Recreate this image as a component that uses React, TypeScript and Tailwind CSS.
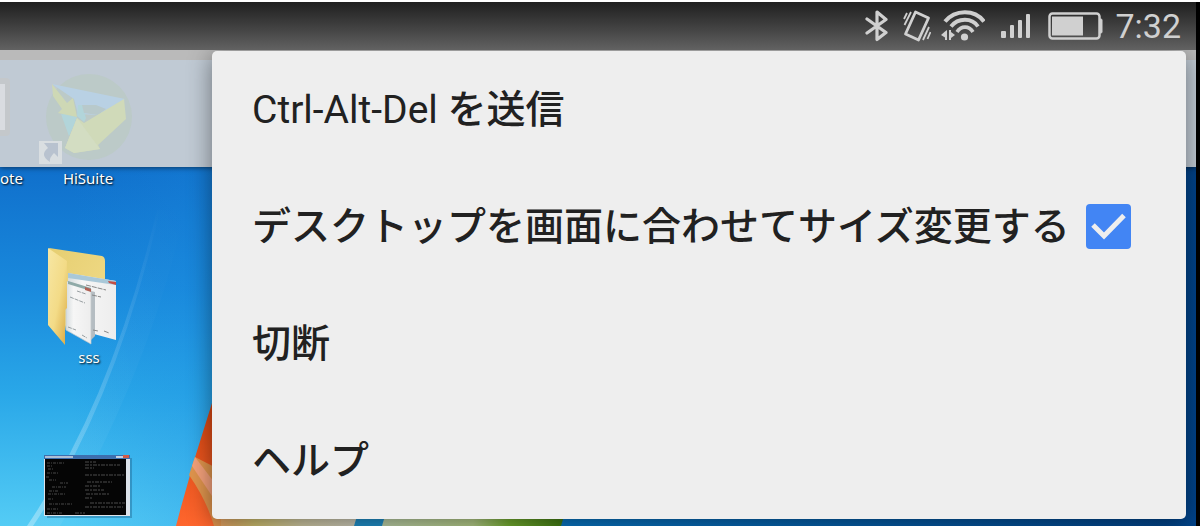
import { useState } from "react";
import type { ReactNode } from "react";

function BluetoothIcon() {
  return (
    <svg className="h-8 w-6" viewBox="0 0 24 32" fill="none" stroke="#d0d0d0" strokeWidth="3.2" aria-hidden="true">
      <path d="M2 9 L21 22.500 L12 29.500 V2 L21 9.500 L2 23" strokeLinejoin="round" strokeLinecap="round" />
    </svg>
  );
}

function VibrateIcon() {
  return (
    <svg className="h-8 w-7" viewBox="0 0 28 32" fill="none" stroke="#d0d0d0" aria-hidden="true">
      <path d="M12.500 2 L25.500 8 L15.500 30 L2.500 24 Z" strokeWidth="2.800" strokeLinejoin="round" />
      <path d="M8 2 L1.500 15 M4 3 L1 9 M26 17 L20 30 M27.500 22 L24.500 29" strokeWidth="1.800" />
    </svg>
  );
}

function WifiIcon() {
  return (
    <svg className="h-8 w-11" viewBox="0 0 44 32" fill="none" stroke="#d0d0d0" aria-hidden="true">
      <path d="M4 11.500 C14 -1 34 -1 43 11.500" strokeWidth="4" />
      <path d="M10 16.500 C17 7.500 31 7.500 37 16.500" strokeWidth="3.800" />
      <path d="M16 22 C20 15.500 28 15.500 32 22" strokeWidth="3.600" />
      <circle cx="23.500" cy="27" r="3.600" fill="#d0d0d0" stroke="none" />
      <path d="M6 20 V30 H4 V27.500 L0 25 L4 21.500 Z M8 20 H10 V22 L14 25 L10 28 V30 H8 Z" fill="#d0d0d0" stroke="none" />
    </svg>
  );
}

function SignalIcon() {
  return (
    <svg className="h-7 w-[30px]" viewBox="0 0 30 28" fill="#d0d0d0" aria-hidden="true">
      <rect x="0" y="19" width="5" height="7" rx="1" />
      <rect x="9" y="13" width="4" height="13" rx="1" />
      <rect x="17" y="8" width="4" height="18" rx="1" />
      <rect x="25" y="2" width="4" height="24" rx="1" />
    </svg>
  );
}

function BatteryIcon() {
  return (
    <svg className="h-7 w-14" viewBox="0 0 56 28" aria-hidden="true">
      <rect x="2.500" y="1.500" width="50" height="25" rx="3" fill="none" stroke="#d0d0d0" strokeWidth="2.500" />
      <rect x="5" y="4.500" width="31" height="19" fill="#d0d0d0" />
      <path d="M53 7 H54 Q55 7 55 8 V20 Q55 21 54 21 H53" fill="#d0d0d0" stroke="#d0d0d0" strokeWidth="1" />
    </svg>
  );
}

function StatusBar() {
  return (
    <header className="flex h-12 shrink-0 items-center justify-end bg-linear-to-b from-[#202020] to-[#626262] pr-[15px] font-[Roboto,sans-serif]">
      <span className="mr-[14px]"><BluetoothIcon /></span>
      <span className="mr-[10px]"><VibrateIcon /></span>
      <span className="mr-4"><WifiIcon /></span>
      <span className="mr-4"><SignalIcon /></span>
      <span className="mr-3"><BatteryIcon /></span>
      <time className="text-[34px] leading-[48px] text-[#d0d0d0]">7:32</time>
    </header>
  );
}

function Wallpaper() {
  return (
    <svg className="absolute inset-0 h-full w-full" viewBox="0 0 1196 476" preserveAspectRatio="none" aria-hidden="true">
      <defs>
        <linearGradient id="sky" x1="0" y1="0" x2="0" y2="1">
          <stop offset="0" stopColor="#0d62bd" />
          <stop offset="0.250" stopColor="#1070cc" />
          <stop offset="0.500" stopColor="#1989dc" />
          <stop offset="0.720" stopColor="#29a7e8" />
          <stop offset="1" stopColor="#54ccf5" />
        </linearGradient>
        <linearGradient id="depth" x1="0" y1="0" x2="1" y2="0">
          <stop offset="0.060" stopColor="#1a86dc" stopOpacity="0" />
          <stop offset="0.180" stopColor="#1c8ce0" stopOpacity="0.300" />
          <stop offset="0.480" stopColor="#0875c3" />
          <stop offset="1" stopColor="#01438a" />
        </linearGradient>
        <linearGradient id="redPane" x1="0" y1="0" x2="0" y2="1">
          <stop offset="0" stopColor="#d44410" />
          <stop offset="1" stopColor="#ff662d" />
        </linearGradient>
        <linearGradient id="warm" x1="0" y1="0" x2="1" y2="0">
          <stop offset="0" stopColor="#dfa060" />
          <stop offset="0.250" stopColor="#d0c070" />
          <stop offset="0.600" stopColor="#d0c9a4" />
          <stop offset="1" stopColor="#cfccba" />
        </linearGradient>
        <linearGradient id="greenPane" x1="0" y1="0" x2="1" y2="0">
          <stop offset="0" stopColor="#bdd0a8" />
          <stop offset="0.500" stopColor="#b4cc88" />
          <stop offset="0.700" stopColor="#74ae30" />
          <stop offset="1" stopColor="#417c12" />
        </linearGradient>
        <linearGradient id="ray" x1="1" y1="0" x2="0" y2="1">
          <stop offset="0" stopColor="#ffffff" stopOpacity="0" />
          <stop offset="1" stopColor="#ffffff" stopOpacity="0.300" />
        </linearGradient>
      </defs>
      <rect width="1196" height="476" fill="url(#sky)" />
      <rect width="1196" height="476" fill="url(#depth)" />
      <path d="M157 160 Q112 350 27 476 H33 Q115 354 160 160 Z" fill="url(#ray)" />
      <path d="M157 160 Q112 350 27 476 H60 Q150 320 185 160 Z" fill="url(#ray)" opacity="0.200" />
      <path d="M212 353 Q192 414 176 476 H360 V353 Z" fill="url(#redPane)" />
      <path d="M189 425 Q207 451 214 476 H240 V430 L195 407 Z" fill="#df944d" />
      <path d="M195 407 L214 432 V449 L192 416 Z" fill="#f3a07a" />
      <rect x="221" y="466" width="136" height="10" fill="url(#warm)" />
      <path d="M357 466 H385 L382 476 H354 Z" fill="#2090cb" />
      <path d="M385 466 H564 L561 476 H382 Z" fill="url(#greenPane)" />
    </svg>
  );
}

function DesktopLabel({ children }: { children: ReactNode }) {
  return (
    <span className="font-['Noto_Sans',sans-serif] text-[15px] leading-5 text-white [text-shadow:1px_1px_2px_#000]">
      {children}
    </span>
  );
}

function RemoteIcon() {
  return (
    <svg className="h-[70px] w-3" viewBox="0 0 12 70" aria-hidden="true">
      <rect x="-40" y="1" width="50" height="58" rx="4" fill="#c4c8cb" />
      <rect x="-40" y="7" width="45" height="46" fill="#d9dce0" />
    </svg>
  );
}

function HiSuiteIcon() {
  return (
    <svg className="h-[104px] w-[100px]" viewBox="0 0 100 104" aria-hidden="true">
      <circle cx="51" cy="50" r="43" fill="#b8cbbd" opacity="0.550" />
      <path d="M14 17 L87 32 L60 48 L40 47 L36 32 Z" fill="#b9d1e4" />
      <path d="M23 47 L31 69 L38 54 Z M40 38 H44 L48 51 L46 55 L39 49 Z" fill="#b2d5da" />
      <path d="M24 46 L31 68 L39 50 Z" fill="#b2d5da" />
      <path d="M46 46 L60 48 L68 42 L58 38 L44 38 Z" fill="#b8c9cb" />
      <path d="M14 17 L29 36 L35 31 L39 50 L20 46 L24 42 L15 29 Z" fill="#ced8b5" />
      <path d="M86 32 L88 52 L60 78 L62 82 L36 86 L27 81 L39 51 L46 56 Z" fill="#d0dab9" />
      <path d="M39 51 L62 82 L36 86 L27 81 Z" fill="#d3ddc2" />
      <rect x="1" y="74" width="23" height="23" fill="#d9dee1" />
      <path d="M6 76 H20 V90 L16 86 Q11 91 12 95 Q1 88 10 81 Z" fill="#b8c2cf" />
    </svg>
  );
}

function FolderIcon() {
  return (
    <svg className="h-[100px] w-[70px]" viewBox="0 0 70 100" aria-hidden="true">
      <defs>
        <linearGradient id="folderFront" x1="0" y1="0" x2="1" y2="1">
          <stop offset="0" stopColor="#f7e7a4" />
          <stop offset="0.550" stopColor="#f3db87" />
          <stop offset="1" stopColor="#d9a944" />
        </linearGradient>
        <linearGradient id="folderBack" x1="0" y1="0" x2="1" y2="1">
          <stop offset="0" stopColor="#e6ce71" />
          <stop offset="1" stopColor="#f1dc8a" />
        </linearGradient>
        <linearGradient id="paper" x1="0" y1="0" x2="1" y2="0">
          <stop offset="0" stopColor="#d5dcde" />
          <stop offset="0.300" stopColor="#f6f6f6" />
          <stop offset="1" stopColor="#ededed" />
        </linearGradient>
      </defs>
      <path d="M1 1 L54 9 Q57 10 57 14 V74 L18 83 Z" fill="url(#folderBack)" />
      <path d="M20 26 L68 34 V93 L20 80 Z" fill="url(#paper)" />
      <path d="M20 26 L68 34 V38 L20 31 Z" fill="#a9c8d8" />
      <path d="M60 34 L68 35 V38 L61 36 Z" fill="#c34e44" />
      <path d="M43 44 L47 45 V89 L43 93 Z" fill="#b5bdc2" />
      <path d="M38 38 L58 43 M44 48 L53 50 M45 83 L50 84 M56 84 L61 86" stroke="#888" strokeWidth="1" strokeDasharray="5 1" />
      <path d="M18 34 L43 42 V97 L18 83 Z" fill="url(#paper)" stroke="#c1c9cc" strokeWidth="0.700" />
      <path d="M20 34 L43 41 V44 L20 37 Z" fill="#8faaa8" />
      <path d="M37 40 L43 42 V45 L37 43 Z" fill="#b06155" />
      <path d="M29 44 L38 47 M22 50 L37 56 M20 80 L28 83 M34 88 L39 91" stroke="#8d9598" strokeWidth="0.900" strokeDasharray="4 1" />
      <path d="M0 1 L19 14 V61 L17 63 V98 L0 78 Z" fill="url(#folderFront)" />
    </svg>
  );
}

function ConsoleIcon() {
  return (
    <svg className="h-[64px] w-[90px]" viewBox="0 0 90 64" aria-hidden="true">
      <rect x="3" y="3" width="85" height="60" fill="#1b5c86" opacity="0.400" />
      <rect width="86" height="61" fill="#dce3ea" />
      <rect width="86" height="4" fill="#3d6fae" />
      <rect x="1" y="1" width="28" height="2" fill="#aebfd4" />
      <rect x="72" y="1" width="7" height="2" fill="#c8d2e0" />
      <rect x="79" y="0" width="6" height="3" fill="#cf5b48" />
      <rect x="1" y="4" width="81" height="56" fill="#050505" />
      <path
        d="M3 8 H21 M3 11 H8 M4 14 H9 M3 18 H15 M2 22 H5 M5 25 H12 M16 28 H24 M8 32 H22 M5 36 H15 M4 39 H21 M4 44 H10 M5 49 H28 M3 54 H15 M3 58 H19"
        stroke="#484848" strokeWidth="1" strokeDasharray="3 1 1 1"
      />
      <path
        d="M41 7 H52 M41 10 H76 M41 13 H50 M41 20 H81 M43 27 H68 M41 31 H57 M41 35 H60 M42 39 H66 M41 43 H48 M46 48 H81 M41 52 H79 M31 58 H41"
        stroke="#4c4c4c" strokeWidth="1" strokeDasharray="4 1 2 1"
      />
    </svg>
  );
}

function MenuItem({ children }: { children: ReactNode }) {
  return (
    <button type="button" role="menuitem" className="h-[117px] w-full pl-10 text-left hover:bg-black/5">
      {children}
    </button>
  );
}

function OptionsMenu() {
  const [fit, setFit] = useState(true);
  return (
    <div
      role="menu"
      className="absolute top-px right-[10px] left-[212px] flex flex-col rounded-[5px] bg-[#eeeeee] font-[Roboto,'Noto_Sans_CJK_JP',sans-serif] text-[39px] leading-[60px] text-[#212121] shadow-[0_4px_24px_rgba(0,0,0,0.45)]"
    >
      <MenuItem>
        Ctrl-Alt-Del <span className="font-medium">を送信</span>
      </MenuItem>
      <label className="flex h-[117px] items-center justify-between pr-[55px] pl-10 whitespace-nowrap">
        <span className="font-medium">デスクトップを画面に合わせてサイズ変更する</span>
        <span className="relative flex size-[45px] shrink-0">
          <input
            type="checkbox"
            checked={fit}
            onChange={(e) => setFit(e.target.checked)}
            className="peer size-full appearance-none rounded-[4px] border-4 border-[#757575] checked:border-0 checked:bg-[#4285f4]"
          />
          <svg className="pointer-events-none absolute inset-0 size-full opacity-0 peer-checked:opacity-100" viewBox="0 0 45 45" aria-hidden="true">
            <path d="M7 21 L18 32 L38 11.500" fill="none" stroke="#eeeeee" strokeWidth="5" />
          </svg>
        </span>
      </label>
      <MenuItem><span className="font-medium">切断</span></MenuItem>
      <MenuItem><span className="font-medium">ヘルプ</span></MenuItem>
    </div>
  );
}

export default function App() {
  return (
    <div className="flex min-h-screen flex-col bg-white pt-[2px]">
      <div className="flex flex-1 flex-col border-r-4 border-black">
        <StatusBar />
        <main className="relative min-h-[476px] flex-1 overflow-hidden">
          <Wallpaper />
          <div className="relative h-[117px] border-t-[10px] border-[#bababa] bg-[#c0cad4] shadow-[0_1px_5px_rgba(0,0,0,0.5)]" />
          <div className="absolute top-[27px] left-0"><RemoteIcon /></div>
          <div className="absolute top-[118px] left-0 flex"><DesktopLabel>ote</DesktopLabel></div>
          <div className="absolute top-[17px] left-[39px] flex w-[98px] flex-col items-center">
            <HiSuiteIcon />
            <div className="-mt-[3px] flex"><DesktopLabel>HiSuite</DesktopLabel></div>
          </div>
          <div className="absolute top-[197px] left-[39px] flex w-[100px] flex-col items-center">
            <div className="mr-3"><FolderIcon /></div>
            <DesktopLabel>sss</DesktopLabel>
          </div>
          <div className="absolute top-[405px] left-[44px]"><ConsoleIcon /></div>
          <OptionsMenu />
        </main>
      </div>
    </div>
  );
}
